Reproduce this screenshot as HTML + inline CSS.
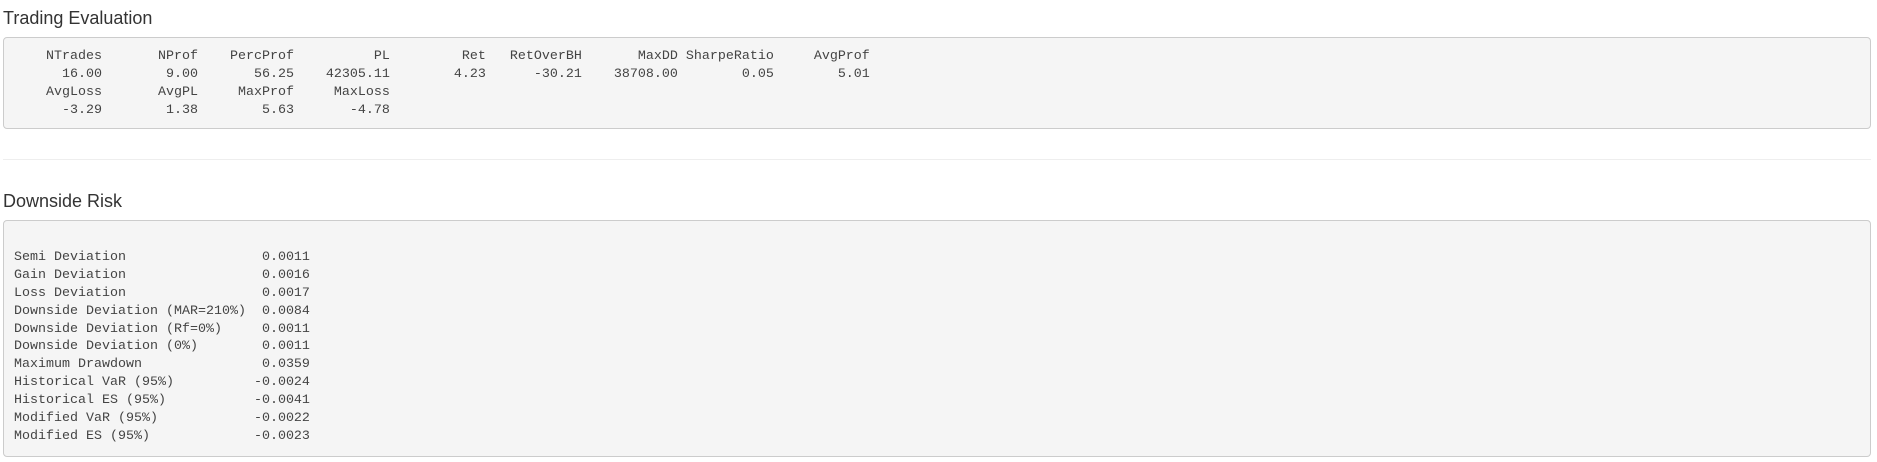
<!DOCTYPE html>
<html><head><meta charset="utf-8"><style>
html,body{margin:0;padding:0;background:#fff;width:1877px;height:462px;overflow:hidden;}
body{position:relative;color:#333;}
h4{position:absolute;left:3px;margin:0;font:18px/18px "Liberation Sans",sans-serif;font-weight:normal;color:#333;}
pre{position:absolute;left:3px;width:1846px;margin:0;padding:10px;background:#f5f5f5;border:1px solid #ccc;border-radius:4px;font:13.33px/17.9px "Liberation Mono",monospace;color:#444;}
.hr{position:absolute;left:3px;top:159px;width:1868px;height:1px;background:#eee;}
</style></head><body>
<h4 style="top:9px">Trading Evaluation</h4>
<pre style="top:37px;height:70px">    NTrades       NProf    PercProf          PL         Ret   RetOverBH       MaxDD SharpeRatio     AvgProf
      16.00        9.00       56.25    42305.11        4.23      -30.21    38708.00        0.05        5.01
    AvgLoss       AvgPL     MaxProf     MaxLoss
      -3.29        1.38        5.63       -4.78</pre>
<div class="hr"></div>
<h4 style="top:192px">Downside Risk</h4>
<pre style="top:220px;height:214.8px">

Semi Deviation                 0.0011
Gain Deviation                 0.0016
Loss Deviation                 0.0017
Downside Deviation (MAR=210%)  0.0084
Downside Deviation (Rf=0%)     0.0011
Downside Deviation (0%)        0.0011
Maximum Drawdown               0.0359
Historical VaR (95%)          -0.0024
Historical ES (95%)           -0.0041
Modified VaR (95%)            -0.0022
Modified ES (95%)             -0.0023</pre>
</body></html>
